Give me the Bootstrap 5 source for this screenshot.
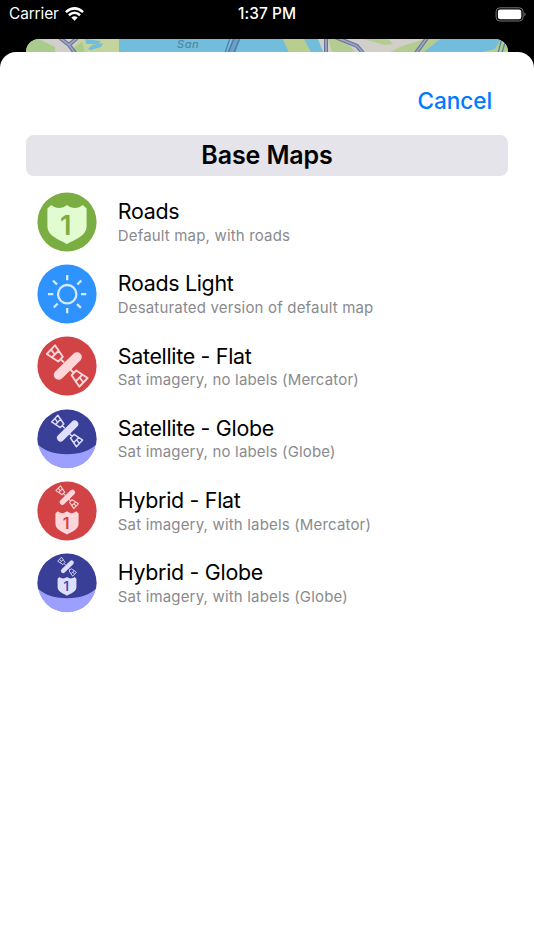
<!DOCTYPE html>
<html lang="en">
<head>
<meta charset="utf-8">
<meta name="viewport" content="width=device-width, initial-scale=1">
<title>Base Maps</title>
<link href="https://cdn.jsdelivr.net/npm/bootstrap@5.3.0/dist/css/bootstrap.min.css" rel="stylesheet">
<style>
body{font-family:Inter,"Liberation Sans",sans-serif;height:950px;overflow:hidden}
.status-strip{height:39px;font-size:15.4px;padding:0 8px 11px 9px;line-height:1}
.status-side{flex:1 1 0}
.carrier{letter-spacing:-.1px}
.wifi{margin-left:-2px}
.status-time{letter-spacing:.1px;margin-left:-1px}
.map-peek{height:13px;margin:0 26px;border-radius:14px 14px 0 0;overflow:hidden}
.map-peek svg{display:block}
.sheet{border-radius:16px 16px 0 0;padding:0 26px}
.sheet-actions{height:82.5px;padding:16px 16px 0 0}
.cancel-btn{font-size:22.6px;font-weight:500;color:#007aff;letter-spacing:-.1px;line-height:1}
.section-title{height:41px;border-radius:8px;background:#e5e4ea;font-size:25px;font-weight:600;letter-spacing:-.1px;line-height:1}
.map-list{padding:10.2px 0 0 11.4px}
.map-row{height:72.25px;gap:20.4px}
.map-row svg{flex:none}
.map-name{font-size:21.4px;line-height:26px;letter-spacing:-.3px}
.map-note{font-size:15px;line-height:20px;color:#8a8a8e;letter-spacing:.17px;margin-top:1.500px}
.glyph-one{font:600 27px Inter,"Liberation Sans",sans-serif}
</style>
<script src="https://cdn.jsdelivr.net/npm/bootstrap@5.3.0/dist/js/bootstrap.bundle.min.js"></script>
</head>
<body class="bg-black d-flex flex-column m-0">
<svg width="0" height="0" class="position-absolute" aria-hidden="true">
  <defs>
    <clipPath id="disc"><circle cx="30" cy="30" r="29.6"/></clipPath>
    <path id="shield" d="M14.2 13C19.5 17.400 25.500 16.600 30 13C34.500 16.600 40.500 17.400 45.800 13L49.600 16.500V34C49.600 44 38 47.500 30 52C22 47.500 10.400 44 10.400 34V16.500Z"/>
    <g id="panel" fill="none" stroke="currentColor" stroke-width="1.900" stroke-linejoin="round">
      <path d="M9.800 18L18 9.300L25.800 20.800L21.200 25.500ZM14.800 21.500L21.700 14.600M14.400 14L17.600 18.300M23.500 22.900L27 26.500"/>
    </g>
    <g id="sat">
      <use href="#panel"/>
      <use href="#panel" transform="rotate(180 30.200 30)"/>
      <path d="M21.600 39L40 21" fill="none" stroke="currentColor" stroke-width="9.600" stroke-linecap="round"/>
    </g>
    <g id="globe" clip-path="url(#disc)">
      <circle cx="30" cy="30" r="29.600" fill="#9d9fff"/>
      <path d="M0 0H60V34.500C54 41.500 43 45.200 30 45.200S6 41.500 0 34.500Z" fill="#393e96"/>
    </g>
  </defs>
</svg>

<header class="status-strip d-flex align-items-center text-white">
  <div class="status-side d-flex align-items-center gap-2">
    <span class="carrier">Carrier</span>
    <svg class="wifi" width="19" height="14" viewBox="0 0 19 14"><g fill="none" stroke="#fff" stroke-width="2.500"><path d="M.9 5.100Q9.500-2.400 18.100 5.100"/><path d="M3.900 8.200Q9.500 3.200 15.100 8.200"/></g><path d="M6.300 10.500Q9.500 7.900 12.700 10.500L9.500 13.700Z" fill="#fff"/></svg>
  </div>
  <span class="fw-medium status-time">1:37 PM</span>
  <div class="status-side d-flex justify-content-end">
    <svg width="31" height="15" viewBox="0 0 31 15"><rect x="1.100" y=".8" width="27" height="13.200" rx="3.800" fill="none" stroke="#777"/><rect x="2.900" y="2.500" width="23.400" height="9.800" rx="2.300" fill="#fff"/><path d="M29.400 5.200Q31.800 7.400 29.400 9.600Z" fill="#777"/></svg>
  </div>
</header>

<div class="map-peek">
  <svg width="482" height="13" viewBox="26 39 482 13">
    <path fill="#d2cfca" d="M26 39H508V52H26Z"/>
    <path fill="#a9cb8c" d="M26 39H39L55 47V52H26Z"/>
    <path fill="#c3d59c" d="M79 39H119V52H70L74 47Z"/>
    <path fill="#a9cb8c" d="M74 48L82 42L85 52H72Z"/>
    <path fill="#72bddb" d="M85 39L101 41L98 44H86ZM88 49L92 45L103 43L101 47L91 50ZM119 39H283L289 52H119Z"/>
    <path fill="#b7ce8e" d="M283 39H313L315 42L311 52H289Z"/>
    <path fill="#72bddb" d="M304 39H318L323 52H311Z"/>
    <path fill="#b3cd90" d="M328 39H336L349 45L355 52H332ZM363 39H388L393 44L385 45ZM390 52L402 46L425 39H440L425 52Z"/>
    <path fill="#72bddb" d="M440 39H500V52H424Z"/>
    <path fill="#b3cd90" d="M482 52L495 49L500 40L508 43V52Z"/>
    <g fill="none" stroke="#68749b" stroke-width="4"><path d="M60 38L69 45L75 53M77 38L69 45M326 38V53M335 37L357 46L363 53M427 38L416 53"/></g>
    <g fill="none" stroke="#9ba4c2" stroke-width="1.800"><path d="M60 38L69 45L75 53M77 38L69 45M326 38V53M335 37L357 46L363 53M427 38L416 53"/></g>
    <path fill="none" stroke="#4b7da8" stroke-width="7" d="M237 38L231 53"/>
    <path fill="none" stroke="#6f9fc8" stroke-width="4" d="M237 38L231 53"/>
    <path fill="none" stroke="#4b7da8" stroke-width="1.200" d="M230 38L225 53M502 38L498 53M506 39L502 53"/>
    <text x="177" y="48" font-family="Inter,sans-serif" font-size="11" font-style="italic" font-weight="500" letter-spacing=".6" fill="#4e88a5">San</text>
  </svg>
</div>

<main class="sheet bg-white flex-grow-1">
  <div class="sheet-actions d-flex align-items-center justify-content-end">
    <button type="button" class="btn p-0 border-0 cancel-btn">Cancel</button>
  </div>
  <h1 class="section-title d-flex align-items-center justify-content-center m-0 text-black">Base Maps</h1>
  <div class="map-list text-black">
    <div class="map-row d-flex align-items-center">
      <svg width="60" height="60" viewBox="0 0 60 60"><circle cx="30" cy="30" r="29.600" fill="#7bae42"/><use href="#shield" fill="#e3fbd1"/><text class="glyph-one" x="28.600" y="43" text-anchor="middle" fill="#7bae42">1</text></svg>
      <div><div class="map-name">Roads</div><div class="map-note">Default map, with roads</div></div>
    </div>
    <div class="map-row d-flex align-items-center">
      <svg width="60" height="60" viewBox="0 0 60 60"><circle cx="30" cy="30" r="29.600" fill="#2e93ff"/><g fill="none" stroke="#d5eaff" stroke-width="2.300"><circle cx="30.200" cy="30.200" r="9.200"/><path d="M30.200 11V16.300M30.200 44V49.300M11 30.200H16.300M44 30.200H49.300M16 16.500L20 20.500M40 40L43.900 43.900M44.300 16.500L40.300 20.500M20.700 39.500L16.800 43.500"/></g></svg>
      <div><div class="map-name">Roads Light</div><div class="map-note">Desaturated version of default map</div></div>
    </div>
    <div class="map-row d-flex align-items-center">
      <svg width="60" height="60" viewBox="0 0 60 60" color="#ffd7da"><circle cx="30" cy="30" r="29.600" fill="#d24346"/><use href="#sat"/></svg>
      <div><div class="map-name">Satellite - Flat</div><div class="map-note">Sat imagery, no labels (Mercator)</div></div>
    </div>
    <div class="map-row d-flex align-items-center">
      <svg width="60" height="60" viewBox="0 0 60 60" color="#dedfff"><use href="#globe"/><use href="#sat" transform="translate(7.200 -.8) scale(.76)"/></svg>
      <div><div class="map-name">Satellite - Globe</div><div class="map-note">Sat imagery, no labels (Globe)</div></div>
    </div>
    <div class="map-row d-flex align-items-center">
      <svg width="60" height="60" viewBox="0 0 60 60" color="#ffd7da"><circle cx="30" cy="30" r="29.600" fill="#d24346"/><use href="#sat" transform="translate(13.500 -.3) scale(.55)"/><g transform="translate(12.300 22.700) scale(.59)"><use href="#shield" fill="currentColor"/><text class="glyph-one" x="28.600" y="43" text-anchor="middle" fill="#d24346">1</text></g></svg>
      <div><div class="map-name">Hybrid - Flat</div><div class="map-note">Sat imagery, with labels (Mercator)</div></div>
    </div>
    <div class="map-row d-flex align-items-center">
      <svg width="60" height="60" viewBox="0 0 60 60" color="#dedfff"><use href="#globe"/><use href="#sat" transform="translate(16.200 -.1) scale(.46)"/><g transform="translate(15.600 17.800) scale(.48)"><use href="#shield" fill="currentColor"/><text class="glyph-one" x="28.600" y="43" text-anchor="middle" fill="#4549b8">1</text></g></svg>
      <div><div class="map-name">Hybrid - Globe</div><div class="map-note">Sat imagery, with labels (Globe)</div></div>
    </div>
  </div>
</main>
</body>
</html>
